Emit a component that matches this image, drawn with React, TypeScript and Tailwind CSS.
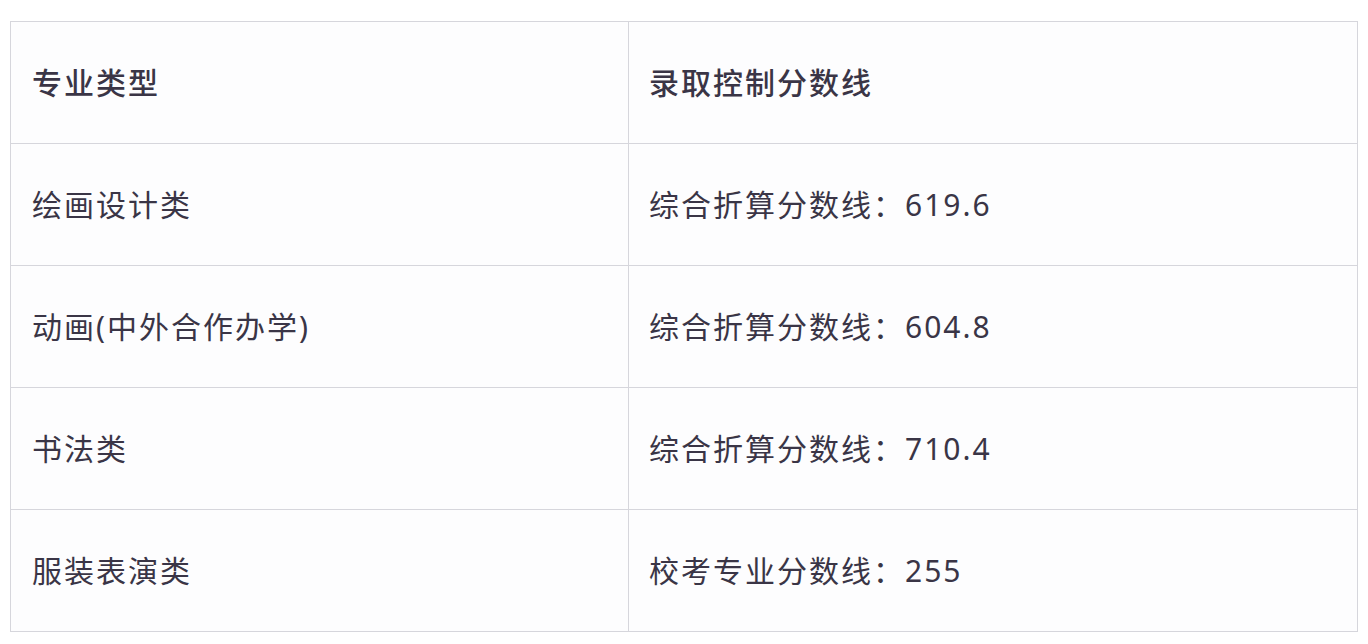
const rows: [string, string][] = [
  ["绘画设计类", "综合折算分数线：619.6"],
  ["动画(中外合作办学)", "综合折算分数线：604.8"],
  ["书法类", "综合折算分数线：710.4"],
  ["服装表演类", "校考专业分数线：255"],
];

export default function App() {
  return (
    <div className="w-[1368px] h-[644px] bg-white pt-[21px] pl-[10px]" style={{ fontFamily: '"Noto Sans", "Noto Sans CJK SC", sans-serif' }}>
      <table className="w-[1348px] border-collapse bg-[#fdfdfe] text-[30px] tracking-[2px] text-[#3a3546]">
        <thead>
          <tr className="h-[122px]">
            <th className="w-[618px] border border-[#d6d6dc] pl-[21px] text-left font-medium">专业类型</th>
            <th className="border border-[#d6d6dc] pl-[20px] text-left font-medium">录取控制分数线</th>
          </tr>
        </thead>
        <tbody>
          {rows.map(([a, b]) => (
            <tr key={a} className="h-[122px]">
              <td className="border border-[#d6d6dc] pl-[21px]">{a}</td>
              <td className="border border-[#d6d6dc] pl-[20px]">{b}</td>
            </tr>
          ))}
        </tbody>
      </table>
    </div>
  );
}
